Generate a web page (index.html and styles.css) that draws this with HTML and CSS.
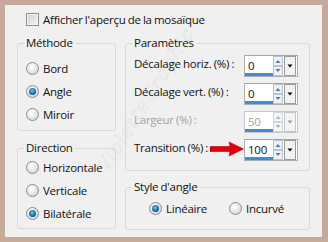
FILE: index.html
```html
<!DOCTYPE html>
<html lang="fr">
<head>
<meta charset="utf-8">
<link rel="stylesheet" href="styles.css">
</head>
<body>
<div class="panel">
  <div class="check"><span class="box"></span><span>Afficher l'aperçu de la mosaïque</span></div>
  <div class="cols">
    <div class="col left">
      <fieldset class="grp methode">
        <legend>Méthode</legend>
        <div class="opt"><span class="radio"></span>Bord</div>
        <div class="opt"><span class="radio on"></span>Angle</div>
        <div class="opt"><span class="radio"></span>Miroir</div>
      </fieldset>
      <fieldset class="grp direction">
        <legend>Direction</legend>
        <div class="opt"><span class="radio"></span>Horizontale</div>
        <div class="opt"><span class="radio"></span>Verticale</div>
        <div class="opt"><span class="radio on"></span>Bilatérale</div>
      </fieldset>
    </div>
    <div class="col right">
      <fieldset class="grp params">
        <legend>Paramètres</legend>
        <div class="row"><span class="lbl">Décalage horiz. (%) :</span><div class="num"><span class="val">0</span><svg class="spin" width="23" height="20" viewBox="0 0 23 20"><rect x="0.5" y="0.5" width="9" height="9" fill="#eef2f6" stroke="#b9c3cd"/><rect x="0.5" y="10.5" width="9" height="9" fill="#eef2f6" stroke="#b9c3cd"/><path d="M2.5 7 L5 4 L7.5 7 Z" fill="#5d7a96"/><path d="M2.5 13 L5 16 L7.5 13 Z" fill="#5d7a96"/><rect x="11.5" y="0.5" width="11" height="19" fill="#f2f2f2" stroke="#9a9a9a"/><path d="M14.5 8.5 L17 11.5 L19.5 8.5 Z" fill="#000"/></svg></div></div>
        <div class="row"><span class="lbl">Décalage vert. (%) :</span><div class="num"><span class="val">0</span><svg class="spin" width="23" height="20" viewBox="0 0 23 20"><rect x="0.5" y="0.5" width="9" height="9" fill="#eef2f6" stroke="#b9c3cd"/><rect x="0.5" y="10.5" width="9" height="9" fill="#eef2f6" stroke="#b9c3cd"/><path d="M2.5 7 L5 4 L7.5 7 Z" fill="#5d7a96"/><path d="M2.5 13 L5 16 L7.5 13 Z" fill="#5d7a96"/><rect x="11.5" y="0.5" width="11" height="19" fill="#f2f2f2" stroke="#9a9a9a"/><path d="M14.5 8.5 L17 11.5 L19.5 8.5 Z" fill="#000"/></svg></div></div>
        <div class="row off"><span class="lbl">Largeur (%) :</span><div class="num"><span class="val">50</span><svg class="spin" width="23" height="20" viewBox="0 0 23 20"><rect x="0.5" y="0.5" width="9" height="9" fill="#f4f6f8" stroke="#cfd5db"/><rect x="0.5" y="10.5" width="9" height="9" fill="#f4f6f8" stroke="#cfd5db"/><path d="M2.5 7 L5 4 L7.5 7 Z" fill="#a9b6c2"/><path d="M2.5 13 L5 16 L7.5 13 Z" fill="#a9b6c2"/><rect x="11.5" y="0.5" width="11" height="19" fill="#f4f4f4" stroke="#c4c4c4"/><path d="M14.5 8.5 L17 11.5 L19.5 8.5 Z" fill="#9a9a9a"/></svg></div></div>
        <div class="row"><span class="lbl">Transition (%) :</span><div class="num"><span class="val">100</span><svg class="spin" width="23" height="20" viewBox="0 0 23 20"><rect x="0.5" y="0.5" width="9" height="9" fill="#eef2f6" stroke="#b9c3cd"/><rect x="0.5" y="10.5" width="9" height="9" fill="#eef2f6" stroke="#b9c3cd"/><path d="M2.5 7 L5 4 L7.5 7 Z" fill="#5d7a96"/><path d="M2.5 13 L5 16 L7.5 13 Z" fill="#5d7a96"/><rect x="11.5" y="0.5" width="11" height="19" fill="#f2f2f2" stroke="#9a9a9a"/><path d="M14.5 8.5 L17 11.5 L19.5 8.5 Z" fill="#000"/></svg></div></div>
      </fieldset>
      <fieldset class="grp style">
        <legend>Style d'angle</legend>
        <div class="pair">
          <div class="opt"><span class="radio on"></span>Linéaire</div>
          <div class="opt"><span class="radio"></span>Incurvé</div>
        </div>
      </fieldset>
    </div>
  </div>
  <div class="mark">VioletteGraphic</div>
  <svg class="arrow" width="34" height="16" viewBox="0 0 34 16"><path d="M0 5.5 L20 5.5 L19 1 L33.5 8 L19 15 L20 10.5 L0 10.5 Z" fill="#e3000d" stroke="#b00008" stroke-width="0.6"/></svg>
</div>
</body>
</html>
```

FILE: styles.css
```css
html, body {
  margin: 0;
  padding: 0;
}
body {
  background: #c6ab9c;
  width: 328px;
  height: 242px;
  font-family: "Open Sans", "Noto Sans", sans-serif;
  font-size: 11.5px;
  letter-spacing: -0.25px;
  word-spacing: -0.5px;
  color: #111;
}
.panel {
  position: relative;
  overflow: hidden;
  margin: 5px 0 0 5px;
  width: 317px;
  height: 232px;
  background: #f0f0f0;
  padding: 6px 0 0 12px;
  box-sizing: border-box;
}
.check {
  display: flex;
  align-items: center;
  height: 16px;
  margin-left: 9px;
  gap: 4px;
}
.box {
  width: 11px;
  height: 11px;
  border: 1px solid #8e8f8f;
  background: linear-gradient(135deg, #cfcfcf, #f6f6f6);
  box-shadow: inset 0 0 0 1px #f4f4f4;
}
.cols {
  display: flex;
  gap: 9px;
  margin-top: 8px;
}
.col {
  display: flex;
  flex-direction: column;
}
.left { width: 99px; }
.right { width: 185px; }
.grp {
  margin: 0;
  padding: 0 0 0 8px;
  border: 1px solid #d9d9d9;
  border-radius: 3px;
  box-sizing: border-box;
  min-width: 0;
}
.grp legend {
  padding: 0 2px;
  margin-left: -2px;
  line-height: 16px;
  height: 16px;
}
.methode { height: 96px; padding-top: 6px; }
.direction { height: 89px; margin-top: 9px; }
.params { height: 136px; padding-top: 1px; }
.style { height: 51px; margin-top: 8px; }
.opt {
  display: flex;
  align-items: center;
  height: 23px;
  gap: 4px;
}
.radio {
  width: 11px;
  height: 11px;
  border-radius: 50%;
  border: 1px solid #8b8c8c;
  background: radial-gradient(circle at 40% 35%, #ffffff 0, #eaeaea 45%, #c9c9c9 100%);
  display: flex;
  align-items: center;
  justify-content: center;
}
.radio.on::before {
  content: "";
  width: 7px;
  height: 7px;
  border-radius: 50%;
  background: radial-gradient(circle at 45% 40%, #6fd0f4 0, #2a8fc7 35%, #0d4f7f 75%, #093657 100%);
}
.row {
  display: flex;
  align-items: center;
  height: 28px;
}
.lbl {
  width: 110px;
  padding-bottom: 6px;
  white-space: nowrap;
}
.off .lbl, .off .val { color: #a3a3a3; }
.num {
  position: relative;
  width: 54px;
  height: 22px;
  box-sizing: border-box;
  border: 1px solid #abadb3;
  border-top-color: #a2a4aa;
  background: #fff;
  display: flex;
  align-items: center;
}
.off .num { border-color: #c8c9cc; }
.num::after {
  content: "";
  position: absolute;
  left: 0;
  bottom: 0;
  width: 28px;
  height: 3px;
  background: #3e8ed6;
}
.val {
  flex: 1;
  padding-left: 3px;
  padding-bottom: 2px;
}
.spin { margin-right: 1px; }
.pair {
  display: flex;
  height: 26px;
  margin-left: 15px;
}
.pair .opt { height: 26px; width: 80px; }
.mark {
  position: absolute;
  left: 45px;
  top: 84px;
  width: 190px;
  text-align: center;
  transform: rotate(-58deg);
  font-family: "DejaVu Serif", serif;
  font-style: italic;
  font-size: 19px;
  color: transparent;
  -webkit-text-stroke: 0.5px rgba(120, 120, 120, 0.16);
  letter-spacing: 1px;
  pointer-events: none;
}
.arrow {
  position: absolute;
  left: 205px;
  top: 136px;
}
```
